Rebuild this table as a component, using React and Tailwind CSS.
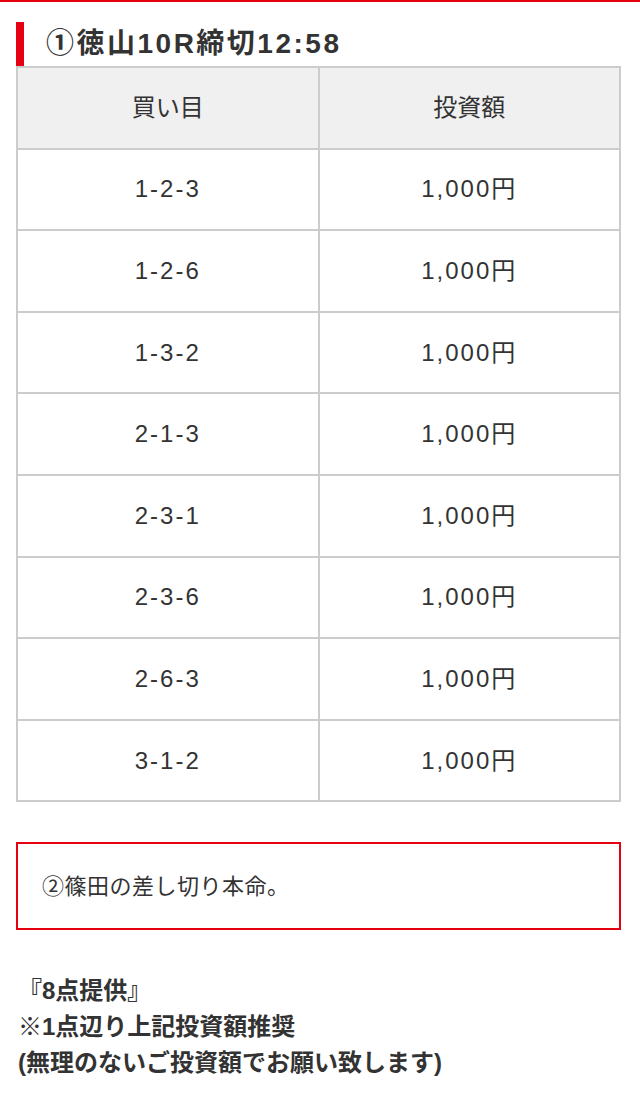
import React from "react";

const bets = ["1-2-3", "1-2-6", "1-3-2", "2-1-3", "2-3-1", "2-3-6", "2-6-3", "3-1-2"];

const font = { fontFamily: '"Liberation Sans", "Noto Sans CJK JP", sans-serif' };

export default function App() {
  return (
    <div className="w-[640px] min-h-[1106px] bg-white text-[#333]" style={font}>
      <div className="h-[2px] bg-[#e60012]" />
      <div className="pl-4 pr-[19px] pt-5">
        <h2 className="flex items-center h-[44px] border-l-[8px] border-[#e60012] pl-[22px] text-[28px] font-bold leading-none tracking-[2.5px]">
          ①徳山10R締切12:58
        </h2>
        <table className="w-full border-collapse table-fixed">
          <thead>
            <tr className="bg-[#f0f0f0]">
              <th className="h-[81.6px] border-2 border-[#ccc] text-[24px] font-normal">買い目</th>
              <th className="h-[81.6px] border-2 border-[#ccc] text-[24px] font-normal">投資額</th>
            </tr>
          </thead>
          <tbody>
            {bets.map((b) => (
              <tr key={b}>
                <td className="h-[81.6px] border-2 border-[#ccc] text-center text-[24px] tracking-[2px]">{b}</td>
                <td className="h-[81.6px] border-2 border-[#ccc] text-center text-[24px] tracking-[2px]">1,000円</td>
              </tr>
            ))}
          </tbody>
        </table>
        <div className="mt-10 h-[88px] border-2 border-[#e60012] flex items-center pl-6 text-[22px] tracking-[0.5px]">
          ②篠田の差し切り本命。
        </div>
        <div className="mt-[43px] pl-[2px] text-[24px] font-bold leading-[36px]">
          <p>『8点提供』</p>
          <p>※1点辺り上記投資額推奨</p>
          <p>(無理のないご投資額でお願い致します)</p>
        </div>
      </div>
    </div>
  );
}
